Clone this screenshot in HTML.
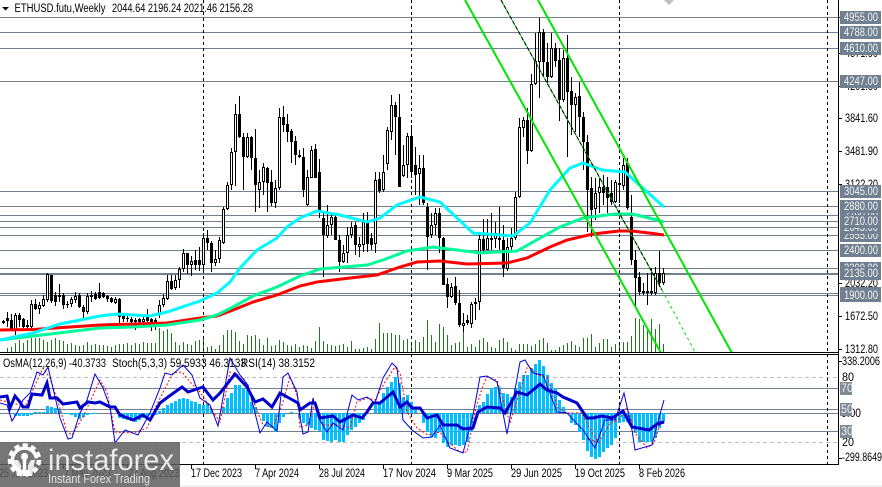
<!DOCTYPE html>
<html><head><meta charset="utf-8"><title>ETHUSD</title>
<style>
html,body{margin:0;padding:0;background:#fff;width:882px;height:487px;overflow:hidden}
svg{display:block}
text{font-family:"Liberation Sans",sans-serif;font-size:11.5px;fill:#000}
.g text{fill:#f2f4f6}
.ns{vector-effect:non-scaling-stroke}
</style></head><body>
<svg width="882" height="487" viewBox="0 0 882 487" xmlns="http://www.w3.org/2000/svg">
<rect width="882" height="487" fill="#fff"/>
<rect x="180" y="485" width="702" height="2" fill="#f0f0f0"/>
<polygon points="664,0 674,0 669,5" fill="#c0c0c0"/>

<!-- volume -->
<path stroke="#1f7a1f" stroke-width="1" fill="none" d="M7.5 352V348M11.5 352V347M15.5 352V343M19.5 352V340M23.5 352V343M27.5 352V340M31.5 352V338M35.5 352V338M39.5 352V338M43.5 352V340M47.5 352V342M51.5 352V340M55.5 352V338M59.5 352V340M63.5 352V341M67.5 352V344M71.5 352V343M75.5 352V345M79.5 352V346M83.5 352V345M87.5 352V342M91.5 352V345M95.5 352V344M99.5 352V345M103.5 352V345M107.5 352V346M111.5 352V347M115.5 352V345M119.5 352V344M123.5 352V344M127.5 352V343M131.5 352V345M135.5 352V343M139.5 352V344M143.5 352V342M147.5 352V343M151.5 352V343M155.5 352V343M159.5 352V328M163.5 352V331M167.5 352V329M171.5 352V333M175.5 352V342M179.5 352V345M183.5 352V342M187.5 352V344M191.5 352V345M195.5 352V341M199.5 352V340M203.5 352V337M207.5 352V347M211.5 352V346M215.5 352V349M219.5 352V345M223.5 352V335M227.5 352V330M231.5 352V330M235.5 352V332M239.5 352V341M243.5 352V344M247.5 352V335M251.5 352V336M255.5 352V335M259.5 352V339M263.5 352V345M267.5 352V338M271.5 352V346M275.5 352V345M279.5 352V340M283.5 352V342M287.5 352V345M291.5 352V346M295.5 352V344M299.5 352V347M303.5 352V345M307.5 352V346M311.5 352V348M315.5 352V341M319.5 352V327M323.5 352V341M327.5 352V344M331.5 352V345M335.5 352V346M339.5 352V345M343.5 352V344M347.5 352V347M351.5 352V341M355.5 352V349M359.5 352V349M363.5 352V348M367.5 352V347M371.5 352V349M375.5 352V339M379.5 352V323M383.5 352V333M387.5 352V333M391.5 352V333M395.5 352V335M399.5 352V335M403.5 352V340M407.5 352V339M411.5 352V343M415.5 352V340M419.5 352V342M423.5 352V337M427.5 352V320M431.5 352V335M435.5 352V342M439.5 352V324M443.5 352V327M447.5 352V335M451.5 352V345M455.5 352V343M459.5 352V342M463.5 352V330M467.5 352V347M471.5 352V344M475.5 352V347M479.5 352V340M483.5 352V338M487.5 352V342M491.5 352V347M495.5 352V348M499.5 352V340M503.5 352V338M507.5 352V342M511.5 352V348M515.5 352V350M519.5 352V344M523.5 352V344M527.5 352V344M531.5 352V346M535.5 352V344M539.5 352V340M543.5 352V338M547.5 352V343M551.5 352V350M555.5 352V350M559.5 352V347M563.5 352V345M567.5 352V343M571.5 352V341M575.5 352V345M579.5 352V347M583.5 352V338M587.5 352V338M591.5 352V334M595.5 352V347M599.5 352V343M603.5 352V339M607.5 352V339M611.5 352V347M615.5 352V344M619.5 352V342M623.5 352V342M627.5 352V342M631.5 352V336M635.5 352V318M639.5 352V319M643.5 352V325M647.5 352V328M651.5 352V319M655.5 352V329M659.5 352V324M663.5 352V344"/>

<!-- horizontal level lines -->
<path stroke="#708090" stroke-width="1" fill="none" d="M0 17.5H839M0 32.5H839M0 48.5H839M0 81.5H839M0 191.5H839M0 206.5H839M0 215.5H839M0 221.5H839M0 227.5H839M0 235.5H839M0 250.5H839M0 268.5H839M0 273.5H839M0 274.5H839M0 293.5H839M0 295.5H839"/>

<!-- vertical dashed -->
<path stroke="#000" stroke-dasharray="3 3" fill="none" d="M203.5 0V464M411.5 0V464M619.5 0V464M827.5 0V464"/>

<!-- candles: wicks -->
<path stroke="#000" stroke-width="1" fill="none" d="M3.5 320V324M7.5 312V327M11.5 314V330M15.5 313V335M19.5 313V327M23.5 318V328M27.5 320V330M31.5 300V330M35.5 299V310M39.5 302V314M43.5 295V307M47.5 273V302M51.5 275V303M55.5 292V306M59.5 284V302M63.5 293V309M67.5 301V308M71.5 297V307M75.5 292V303M79.5 293V308M83.5 305V320M87.5 293V314M91.5 291V302M95.5 292V300M99.5 283V299M103.5 292V298M107.5 295V302M111.5 297V303M115.5 297V304M119.5 298V325M123.5 313V322M127.5 315V322M131.5 317V323M135.5 318V330M139.5 318V325M143.5 317V325M147.5 309V323M151.5 318V331M155.5 318V330M159.5 300V318M163.5 294V307M167.5 275V300M171.5 275V290M175.5 275V290M179.5 267V288M183.5 249V272M187.5 253V274M191.5 256V276M195.5 250V270M199.5 247V271M203.5 233V271M207.5 230V250M211.5 241V272M215.5 250V266M219.5 237V263M223.5 207V244M227.5 182V210M231.5 148V190M235.5 104V186M239.5 96V138M243.5 133V190M247.5 133V158M251.5 136V170M255.5 129V212M259.5 170V208M263.5 163V195M267.5 167V212M271.5 170V206M275.5 180V208M279.5 108V190M283.5 106V132M287.5 114V142M291.5 129V163M295.5 136V165M299.5 150V158M303.5 148V197M307.5 170V206M311.5 146V178M315.5 144V178M319.5 159V218M323.5 211V277M327.5 205V238M331.5 212V235M335.5 213V240M339.5 235V272M343.5 245V263M347.5 227V263M351.5 222V238M355.5 222V255M359.5 237V257M363.5 213V252M367.5 212V252M371.5 233V250M375.5 172V253M379.5 172V193M383.5 155V192M387.5 127V170M391.5 95V140M395.5 102V155M399.5 94V187M403.5 145V177M407.5 133V178M411.5 125V178M415.5 147V195M419.5 155V205M423.5 155V205M427.5 203V270M431.5 213V238M435.5 208V235M439.5 208V253M443.5 237V285M447.5 278V308M451.5 283V298M455.5 277V305M459.5 290V327M463.5 313V332M467.5 315V325M471.5 302V328M475.5 298V320M479.5 235V310M483.5 219V252M487.5 219V250M491.5 213V250M495.5 222V248M499.5 207V250M503.5 225V277M507.5 238V271M511.5 228V250M515.5 192V240M519.5 118V198M523.5 117V137M527.5 108V164M531.5 74V152M535.5 33V85M539.5 18V98M543.5 29V77M547.5 43V85M551.5 33V78M555.5 43V67M559.5 48V121M563.5 50V102M567.5 35V157M571.5 77V135M575.5 93V132M579.5 82V137M583.5 112V170M587.5 135V232M591.5 177V237M595.5 178V220M599.5 178V213M603.5 175V205M607.5 177V213M611.5 180V205M615.5 180V203M619.5 170V203M623.5 158V190M627.5 158V210M631.5 195V265M635.5 250V306M639.5 272V295M643.5 283V295M647.5 273V305M651.5 268V295M655.5 267V295M659.5 251V287M663.5 268V285"/>
<!-- black bodies -->
<path fill="#000" d="M2 321h3v2h-3zM6 318h3v3h-3zM10 320h3v9h-3zM18 315h3v5h-3zM22 319h3v8h-3zM26 325h3v2h-3zM34 304h3v5h-3zM50 275h3v26h-3zM54 295h3v7h-3zM58 295h3v2h-3zM62 295h3v10h-3zM66 304h3v1h-3zM78 295h3v12h-3zM82 307h3v5h-3zM90 295h3v2h-3zM94 294h3v5h-3zM98 292h3v6h-3zM102 293h3v4h-3zM106 296h3v3h-3zM110 298h3v4h-3zM118 299h3v18h-3zM122 316h3v3h-3zM126 318h3v1h-3zM130 319h3v3h-3zM134 320h3v2h-3zM138 319h3v3h-3zM146 315h3v6h-3zM150 319h3v3h-3zM154 320h3v2h-3zM170 281h3v8h-3zM186 253h3v12h-3zM194 260h3v5h-3zM198 260h3v5h-3zM206 238h3v5h-3zM210 243h3v20h-3zM238 114h3v23h-3zM242 137h3v20h-3zM250 137h3v21h-3zM254 158h3v27h-3zM266 168h3v15h-3zM270 182h3v21h-3zM282 117h3v8h-3zM286 124h3v8h-3zM290 131h3v11h-3zM294 141h3v14h-3zM298 155h3v2h-3zM302 157h3v33h-3zM314 149h3v29h-3zM318 172h3v40h-3zM322 218h3v17h-3zM334 217h3v23h-3zM338 240h3v22h-3zM354 225h3v20h-3zM366 222h3v22h-3zM370 238h3v7h-3zM378 179h3v12h-3zM394 105h3v12h-3zM398 117h3v70h-3zM410 136h3v36h-3zM414 165h3v10h-3zM422 168h3v35h-3zM426 207h3v30h-3zM438 213h3v25h-3zM442 238h3v47h-3zM446 284h3v13h-3zM454 286h3v17h-3zM458 303h3v22h-3zM466 320h3v3h-3zM482 239h3v11h-3zM498 238h3v2h-3zM502 240h3v28h-3zM526 120h3v31h-3zM542 32h3v30h-3zM546 62h3v15h-3zM554 48h3v13h-3zM558 60h3v40h-3zM566 58h3v34h-3zM570 91h3v14h-3zM578 96h3v21h-3zM582 117h3v25h-3zM586 142h3v48h-3zM590 188h3v22h-3zM602 187h3v6h-3zM606 187h3v11h-3zM610 193h3v9h-3zM618 183h3v2h-3zM626 163h3v45h-3zM630 217h3v43h-3zM634 260h3v18h-3zM638 277h3v15h-3zM646 291h3v2h-3zM650 291h3v2h-3zM658 273h3v10h-3z"/>
<!-- hollow bodies -->
<path fill="#fff" stroke="#000" stroke-width="1" d="M14.5 315.5h2v14h-2zM30.5 304.5h2v22h-2zM38.5 305.5h2v3h-2zM42.5 299.5h2v6h-2zM46.5 274.5h2v25h-2zM70.5 299.5h2v4h-2zM74.5 296.5h2v3h-2zM86.5 296.5h2v15h-2zM114.5 299.5h2v3h-2zM142.5 319.5h2v2h-2zM158.5 305.5h2v9h-2zM162.5 298.5h2v6h-2zM166.5 281.5h2v17h-2zM174.5 280.5h2v7h-2zM178.5 269.5h2v10h-2zM182.5 253.5h2v15h-2zM190.5 261.5h2v3h-2zM202.5 238.5h2v26h-2zM214.5 259.5h2v3h-2zM218.5 240.5h2v18h-2zM222.5 209.5h2v33h-2zM226.5 185.5h2v23h-2zM230.5 152.5h2v32h-2zM234.5 114.5h2v37h-2zM246.5 137.5h2v19h-2zM258.5 182.5h2v7h-2zM262.5 167.5h2v14h-2zM274.5 188.5h2v14h-2zM278.5 117.5h2v70h-2zM306.5 177.5h2v27h-2zM310.5 150.5h2v27h-2zM326.5 225.5h2v10h-2zM330.5 217.5h2v7h-2zM342.5 253.5h2v8h-2zM346.5 235.5h2v17h-2zM350.5 227.5h2v7h-2zM358.5 244.5h2v2h-2zM362.5 222.5h2v22h-2zM374.5 180.5h2v63h-2zM382.5 172.5h2v17h-2zM386.5 130.5h2v33h-2zM390.5 105.5h2v26h-2zM402.5 165.5h2v10h-2zM406.5 136.5h2v28h-2zM418.5 168.5h2v5h-2zM430.5 225.5h2v9h-2zM434.5 213.5h2v11h-2zM450.5 287.5h2v9h-2zM462.5 323.5h2v2h-2zM470.5 304.5h2v19h-2zM474.5 302.5h2v1h-2zM478.5 239.5h2v62h-2zM486.5 238.5h2v11h-2zM490.5 238.5h2v1h-2zM494.5 233.5h2v5h-2zM506.5 247.5h2v21h-2zM510.5 238.5h2v8h-2zM514.5 197.5h2v40h-2zM518.5 127.5h2v69h-2zM522.5 120.5h2v7h-2zM530.5 84.5h2v66h-2zM534.5 61.5h2v22h-2zM538.5 32.5h2v29h-2zM550.5 48.5h2v28h-2zM562.5 58.5h2v41h-2zM574.5 97.5h2v7h-2zM594.5 193.5h2v15h-2zM598.5 187.5h2v5h-2zM614.5 182.5h2v19h-2zM622.5 165.5h2v20h-2zM642.5 291.5h2v1h-2zM654.5 273.5h2v19h-2zM662.5 273.5h2v9h-2z"/>

<!-- MAs -->
<polyline fill="none" stroke="#ff0000" stroke-width="3" points="0,330 33,329.5 100,325 167,323 200,318 217,316 233,310 253,302 277,295 300,286 317,282 350,278 377,275 400,267 417,262 440,261 467,264 507,263 527,258 550,247 567,240 593,234 619,231 632,231 649,233 664,235"/>
<polyline fill="none" stroke="#00fa9a" stroke-width="3" points="0,340 67,332 100,328 133,327 167,325 200,320 217,315 233,307 253,296 277,287 300,276 320,269 367,265 383,260 407,251 433,247 457,250 480,253 517,251 533,242 560,227 583,218 615,214 632,214 649,218 664,222"/>
<polyline fill="none" stroke="#00f8ff" stroke-width="3" points="0,340 33,333 60,324 100,316 117,314 150,316 167,312 200,301 217,293 230,282 240,268 257,250 277,238 287,227 300,218 317,211 340,215 367,222 380,218 397,205 420,197 440,202 457,218 473,233 500,235 513,236 530,223 550,190 570,168 583,163 602,170 625,172 645,190 664,207"/>

<!-- channels -->
<g fill="none">
<path stroke="#00e600" stroke-width="2" d="M465 0L661 353M538 0L732 353"/>
<path stroke="#00e600" stroke-width="1" d="M501 0L662 290"/>
<path stroke="#000" stroke-width="1" stroke-dasharray="4 2" d="M501 0L662 290"/>
<path stroke="#00e600" stroke-width="1" stroke-dasharray="3 3" d="M662 290L695 352"/>
</g>
<rect x="0" y="353" width="839" height="111" fill="#fff"/>

<!-- indicator window -->
<path stroke="#708090" fill="none" d="M0 388.5H839M0 409.5H839M0 413.5H839M0 431.5H839"/>
<path stroke="#c0c0c0" stroke-dasharray="4 3" fill="none" d="M0 377.5H839M0 442.5H839"/>
<path stroke="#000" stroke-dasharray="3 3" fill="none" d="M203.5 354V464M411.5 354V464M619.5 354V464M827.5 354V464"/>
<path stroke="#00bfff" stroke-width="3" fill="none" d="M15.5 413V416M19.5 413V416M23.5 413V416M27.5 413V416M31.5 413V415M35.5 413V412M39.5 413V412M43.5 413V412M47.5 413V406M51.5 413V407M55.5 413V408M59.5 413V410M63.5 413V414M67.5 413V414M71.5 413V415M75.5 413V417M79.5 413V419M83.5 413V417M87.5 413V415M91.5 413V414M95.5 413V414M119.5 413V418M123.5 413V419M127.5 413V420M131.5 413V421M135.5 413V422M139.5 413V420M143.5 413V418M147.5 413V416M151.5 413V415M155.5 413V415M159.5 413V411M163.5 413V408M167.5 413V405M171.5 413V403M175.5 413V401M179.5 413V399M183.5 413V398M187.5 413V399M191.5 413V401M195.5 413V402M199.5 413V404M203.5 413V405M207.5 413V403M211.5 413V410M223.5 413V407M227.5 413V398M231.5 413V393M235.5 413V385M239.5 413V385M243.5 413V388M247.5 413V390M251.5 413V402M255.5 413V407M263.5 413V421M267.5 413V427M271.5 413V428M275.5 413V432M279.5 413V423M283.5 413V417M291.5 413V412M299.5 413V418M303.5 413V423M307.5 413V425M311.5 413V428M315.5 413V430M319.5 413V431M323.5 413V440M327.5 413V441M331.5 413V442M335.5 413V440M339.5 413V442M343.5 413V442M347.5 413V435M351.5 413V430M355.5 413V427M359.5 413V423M363.5 413V420M375.5 413V405M379.5 413V402M383.5 413V393M387.5 413V387M391.5 413V382M395.5 413V377M399.5 413V383M403.5 413V397M407.5 413V395M411.5 413V402M415.5 413V410M423.5 413V423M427.5 413V432M431.5 413V437M435.5 413V438M439.5 413V432M443.5 413V443M447.5 413V447M451.5 413V445M455.5 413V445M459.5 413V446M463.5 413V445M467.5 413V442M471.5 413V432M479.5 413V405M483.5 413V402M487.5 413V394M491.5 413V388M495.5 413V387M499.5 413V387M503.5 413V393M507.5 413V394M511.5 413V397M515.5 413V388M519.5 413V382M523.5 413V375M527.5 413V375M531.5 413V368M535.5 413V364M539.5 413V360M543.5 413V366M547.5 413V375M551.5 413V383M555.5 413V388M559.5 413V400M563.5 413V407M571.5 413V423M575.5 413V425M579.5 413V432M583.5 413V440M587.5 413V451M591.5 413V457M595.5 413V459M599.5 413V457M603.5 413V452M607.5 413V448M611.5 413V445M615.5 413V438M619.5 413V423M623.5 413V422M627.5 413V422M631.5 413V425M635.5 413V433M639.5 413V442M643.5 413V442M647.5 413V442M651.5 413V442M655.5 413V438M659.5 413V428M663.5 413V422"/>

<!-- stoch signal (red dashed) -->
<polyline fill="none" stroke="#ff0000" stroke-width="1" stroke-dasharray="2 2" points="0,400 20,405 25,407 43,368 50,378 58,402 67,432 72,435 83,417 100,380 107,392 115,432 133,433 147,428 155,408 173,373 182,372 190,382 200,392 213,412 220,422 230,372 243,377 248,388 263,425 273,427 282,405 290,377 298,398 300,428 308,425 315,402 323,425 337,425 350,428 357,402 367,398 375,400 385,382 395,367 400,373 407,412 417,428 428,435 440,432 448,442 460,452 467,452 475,412 482,388 487,377 497,380 510,423 517,400 528,365 537,375 547,377 558,408 567,413 582,413 593,435 600,443 587,438 592,443 602,438 610,423 619,420 627,407 635,433 647,448 654,443 662,418"/>
<!-- stoch main -->
<polyline fill="none" stroke="#0000e0" stroke-width="1" points="0,403 7,405 12,421 17,413 23,400 30,393 37,372 43,375 48,367 60,418 68,439 72,438 80,413 87,400 95,374 103,388 110,407 115,443 125,430 138,435 150,413 160,388 165,373 172,375 183,365 192,375 200,398 210,405 218,426 230,358 240,375 248,385 260,433 267,422 277,431 283,377 288,373 297,392 300,417 303,434 308,432 313,398 318,417 327,432 333,423 343,430 352,395 358,400 367,397 375,403 383,378 392,363 397,368 403,420 412,430 423,438 432,437 440,425 450,448 463,453 473,415 480,377 487,376 497,382 507,434 520,362 525,360 533,373 543,375 557,412 567,413 583,430 595,448 605,420 615,420 624,393 632,430 635,450 652,445 657,425 664,400"/>
<!-- RSI -->
<polyline fill="none" stroke="#0000cd" stroke-width="3" points="0,397 7,396 10,408 15,396 20,402 23,407 28,407 32,394 42,395 47,383 50,398 57,398 63,404 77,402 80,408 88,402 95,403 100,402 110,407 115,407 120,415 133,420 143,415 150,420 160,403 168,397 182,387 188,392 203,387 213,400 220,393 235,374 247,387 255,402 263,399 272,407 280,393 298,403 300,410 310,403 315,403 320,418 333,416 340,422 353,415 362,418 367,412 373,403 380,403 393,392 400,407 407,402 412,408 420,408 427,418 437,415 443,425 457,425 463,429 473,428 478,412 487,407 500,408 505,413 517,392 527,395 540,384 547,390 557,393 563,397 577,403 587,418 593,418 602,416 612,418 623,411 632,427 649,430 657,424 664,422"/>

<!-- frames -->
<path stroke="#000" fill="none" d="M0 352.5H839M0 354.5H839M0 464.5H839M838.5 0V465"/>
<path stroke="#000" fill="none" d="M839 17.5h3M839 53.5h3M839 86.5h3M839 118.5h3M839 151.5h3M839 184.5h3M839 283.5h3M839 316.5h3M839 349.5h3M839 361.5h3M839 458.5h3M191.5 465v4M255.5 465v4M319.5 465v4M383.5 465v4M447.5 465v4M511.5 465v4M575.5 465v4M639.5 465v4M127.5 465v4M63.5 465v4"/>

<!-- header -->
<polygon points="2,7 9,7 5.5,10.5" fill="#000"/>
<text x="14.5" y="12" textLength="91" lengthAdjust="spacingAndGlyphs">ETHUSD.futu,Weekly</text>
<text x="112" y="12" textLength="141" lengthAdjust="spacingAndGlyphs">2044.64 2196.24 2021.46 2156.28</text>
<text x="3" y="367" textLength="103" lengthAdjust="spacingAndGlyphs">OsMA(12,26,9) -40.3733</text>
<text x="112" y="367" textLength="134" lengthAdjust="spacingAndGlyphs">Stoch(5,3,3) 59.5933 46.3133</text>
<text x="241" y="367" textLength="74" lengthAdjust="spacingAndGlyphs">RSI(14) 38.3152</text>

<!-- black axis labels -->
<g>
<text x="845" y="57" textLength="33" lengthAdjust="spacingAndGlyphs">4571.90</text>
<text x="845" y="90" textLength="33" lengthAdjust="spacingAndGlyphs">4201.30</text>
<text x="845" y="122" textLength="33" lengthAdjust="spacingAndGlyphs">3841.60</text>
<text x="845" y="155" textLength="33" lengthAdjust="spacingAndGlyphs">3481.90</text>
<text x="845" y="188" textLength="33" lengthAdjust="spacingAndGlyphs">3122.20</text>
<text x="845" y="287" textLength="33" lengthAdjust="spacingAndGlyphs">2032.20</text>
<text x="845" y="320" textLength="33" lengthAdjust="spacingAndGlyphs">1672.50</text>
<text x="845" y="353" textLength="33" lengthAdjust="spacingAndGlyphs">1312.80</text>
<text x="842" y="365" textLength="38" lengthAdjust="spacingAndGlyphs">338.2006</text>
<text x="841" y="417" textLength="20" lengthAdjust="spacingAndGlyphs">0.00</text>
<text x="842" y="461" textLength="40" lengthAdjust="spacingAndGlyphs">-299.8649</text>
<text x="842" y="381" textLength="12" lengthAdjust="spacingAndGlyphs">80</text>
<text x="842" y="446" textLength="12" lengthAdjust="spacingAndGlyphs">20</text>
</g>

<!-- grey price tags -->
<g class="g">
<rect x="840" y="11" width="41" height="13" fill="#708090"/><text x="844" y="21" textLength="34" lengthAdjust="spacingAndGlyphs">4955.00</text>
<rect x="840" y="26" width="41" height="13" fill="#708090"/><text x="844" y="36" textLength="34" lengthAdjust="spacingAndGlyphs">4788.00</text>
<rect x="840" y="42" width="41" height="13" fill="#708090"/><text x="844" y="52" textLength="34" lengthAdjust="spacingAndGlyphs">4610.00</text>
<rect x="840" y="75" width="41" height="13" fill="#708090"/><text x="844" y="85" textLength="34" lengthAdjust="spacingAndGlyphs">4247.00</text>
<rect x="840" y="185" width="41" height="13" fill="#708090"/><text x="844" y="195" textLength="34" lengthAdjust="spacingAndGlyphs">3045.00</text>
<rect x="840" y="229" width="41" height="13" fill="#708090"/><text x="844" y="239" textLength="34" lengthAdjust="spacingAndGlyphs">2555.00</text>
<rect x="840" y="221" width="41" height="13" fill="#708090"/><text x="844" y="231" textLength="34" lengthAdjust="spacingAndGlyphs">2645.00</text>
<rect x="840" y="209" width="41" height="13" fill="#708090"/><text x="844" y="219" textLength="34" lengthAdjust="spacingAndGlyphs">2790.00</text>
<rect x="840" y="215" width="41" height="13" fill="#708090"/><text x="844" y="225" textLength="34" lengthAdjust="spacingAndGlyphs">2710.00</text>
<rect x="840" y="200" width="41" height="13" fill="#708090"/><text x="844" y="210" textLength="34" lengthAdjust="spacingAndGlyphs">2880.00</text>
<rect x="840" y="244" width="41" height="13" fill="#708090"/><text x="844" y="254" textLength="34" lengthAdjust="spacingAndGlyphs">2400.00</text>
<rect x="840" y="262" width="41" height="13" fill="#708090"/><text x="844" y="272" textLength="34" lengthAdjust="spacingAndGlyphs">2300.00</text>
<rect x="840" y="267" width="41" height="13" fill="#708090"/><text x="844" y="277" textLength="34" lengthAdjust="spacingAndGlyphs">2135.00</text>
<rect x="840" y="287" width="41" height="13" fill="#708090"/>
<rect x="840" y="289" width="41" height="13" fill="#708090"/><text x="844" y="299" textLength="34" lengthAdjust="spacingAndGlyphs">1900.00</text>
<rect x="840" y="382" width="12" height="13" fill="#808b96"/><text x="841" y="392" textLength="12" lengthAdjust="spacingAndGlyphs">70</text>
<rect x="840" y="403" width="12" height="13" fill="#808b96"/><text x="841" y="413" textLength="12" lengthAdjust="spacingAndGlyphs">50</text>
<rect x="840" y="425" width="12" height="13" fill="#808b96"/><text x="841" y="435" textLength="12" lengthAdjust="spacingAndGlyphs">30</text>
</g>

<!-- dates -->
<g>
<text x="-1" y="477" textLength="49" lengthAdjust="spacingAndGlyphs">25 Jan 2023</text>
<text x="64" y="477" textLength="47" lengthAdjust="spacingAndGlyphs">7 May 2023</text>
<text x="128" y="477" textLength="51" lengthAdjust="spacingAndGlyphs">27 Aug 2023</text>
<text x="191" y="477" textLength="51" lengthAdjust="spacingAndGlyphs">17 Dec 2023</text>
<text x="255" y="477" textLength="44" lengthAdjust="spacingAndGlyphs">7 Apr 2024</text>
<text x="319" y="477" textLength="46" lengthAdjust="spacingAndGlyphs">28 Jul 2024</text>
<text x="383" y="477" textLength="53" lengthAdjust="spacingAndGlyphs">17 Nov 2024</text>
<text x="447" y="477" textLength="46" lengthAdjust="spacingAndGlyphs">9 Mar 2025</text>
<text x="511" y="477" textLength="51" lengthAdjust="spacingAndGlyphs">29 Jun 2025</text>
<text x="575" y="477" textLength="50" lengthAdjust="spacingAndGlyphs">19 Oct 2025</text>
<text x="639" y="477" textLength="46" lengthAdjust="spacingAndGlyphs">8 Feb 2026</text>
</g>

<!-- logo -->
<rect x="0" y="442" width="180" height="45" fill="#5e5e5e" fill-opacity=".85"/>
<g fill="none" stroke="#fff">
<circle cx="24.5" cy="460" r="14.5" stroke-width="4.5" stroke-dasharray="5 3.3"/>
<circle cx="24.5" cy="460" r="12" stroke-width="3.5" stroke-dasharray="40 16" transform="rotate(-200 24.5 460)"/>
</g>
<circle cx="24.5" cy="456.5" r="3.6" fill="#fff"/>
<path d="M24.5 458V476" stroke="#fff" stroke-width="3.5"/>
<path d="M14 460l4 0 3 5v11h-4zM35 460l-4 0-3 5v11h4z" fill="#fff" fill-opacity=".85"/>
<text x="48" y="470" textLength="126" lengthAdjust="spacingAndGlyphs" style="font-size:30px;fill:#fff;fill-opacity:.85">instaforex</text>
<text x="48" y="483" textLength="102" lengthAdjust="spacingAndGlyphs" style="font-size:12.5px;fill:#e2e2e2">Instant Forex Trading</text>
</svg>
</body></html>
